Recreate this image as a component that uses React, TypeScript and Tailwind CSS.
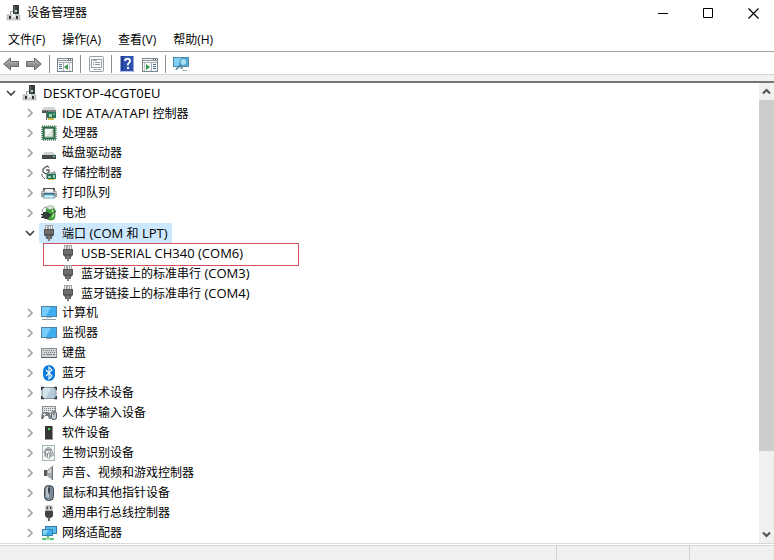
import type { ReactNode } from "react"

const icons: Record<string, ReactNode> = {
  computerRoot: (
    <>
      <rect x="7" y="0" width="6" height="9" fill="#3c3c3c" />
      <rect x="8" y="1" width="1" height="7" fill="#6a6a6a" />
      <rect x="9" y="5" width="2" height="2" fill="#8fd6e8" />
      <path d="M4.5 9V6.5H7" fill="none" stroke="#999" />
      <path d="M2 9h11l1 2H1z" fill="#e2e2e2" />
      <rect x="1" y="10" width="13" height="5" fill="#d2d2d2" stroke="#a3a3a3" strokeWidth=".6" />
      <rect x="3" y="11" width="2" height="3" fill="#333" />
      <rect x="10" y="11" width="2" height="3" fill="#333" />
      <rect x="6" y="9" width="3" height="3" fill="#f5f5f5" />
    </>
  ),
  ide: (
    <>
      <path d="M3 2h10l2 3H1z" fill="#d3d6d6" />
      <rect x="1" y="5" width="14" height="3" fill="#7b8080" />
      <rect x="1" y="6" width="6" height="2" fill="#4b4f4f" />
      <rect x="6" y="7" width="9" height="6" fill="#2a7356" />
      <path d="M8 9h3v3H8z" fill="#a5d8bb" />
      <path d="M12 8h2v2h-2z" fill="#5fae8a" />
      <path d="M5.5 6v9" stroke="#666" />
      <rect x="7" y="13" width="6" height="2" fill="#d5b640" />
    </>
  ),
  cpu: (
    <>
      <rect x="1" y="1" width="14" height="14" fill="none" stroke="#55876a" strokeWidth="1.6" strokeDasharray="1 1" />
      <rect x="1.5" y="1.5" width="13" height="13" fill="#2d6a47" />
      <rect x="4" y="4" width="8" height="8" fill="#dfe8e1" stroke="#a2bba9" />
      <path d="M4 4h8l-8 8z" fill="#f3f7f4" />
    </>
  ),
  disk: (
    <>
      <path d="M4 7h8l3 3H1z" fill="#d2d4d4" />
      <rect x="1" y="10" width="14" height="4" fill="#444b4b" />
      <rect x="12" y="11" width="2" height="1" fill="#5bea86" />
    </>
  ),
  storage: (
    <>
      <path d="M8 2.5 6 1 2 4v3l3 2 3-2V5H5" fill="none" stroke="#515856" strokeWidth="1.3" />
      <path d="M1 9v2l3 3" fill="none" stroke="#59615e" />
      <path d="m5 9 9-3 1 3v5H5z" fill="#9aa6a1" />
      <path d="M6 9h9v5H6z" fill="#2a7356" />
      <path d="M7 11h3v2H7zM12 10h2v3h-2z" fill="#9ccdb0" />
      <rect x="7" y="14" width="6" height="1" fill="#d8b838" />
    </>
  ),
  printer: (
    <>
      <path d="M2 3h12v3H2z" fill="#4f5355" />
      <path d="M4 4h8v3H4z" fill="#f0f4f6" />
      <path d="M0 7 2 5h2v2h8V5h2l2 2v5H0z" fill="#969b9e" />
      <path d="M0 7h16v1H0z" fill="#c9cdcf" />
      <path d="M3 8h10v2H3z" fill="#2d4a55" />
      <path d="M4 9h8l2 4H2z" fill="#dff5fb" stroke="#4a93ab" strokeWidth=".8" />
      <path d="M4 9h8l.5 1.5h-9z" fill="#49a9c6" />
    </>
  ),
  battery: (
    <>
      <path d="M1 7c0-3 2-5 5-5" fill="none" stroke="#8b958f" />
      <rect x="5" y="2" width="9" height="13" rx="4" fill="#3fa435" stroke="#2d7526" strokeWidth=".6" />
      <ellipse cx="9.5" cy="2.6" rx="3.5" ry="1.9" fill="#d9e5d8" stroke="#7a9478" strokeWidth=".6" />
      <path d="M11 5.5c2 1 2 5 0 7" fill="none" stroke="#b4ee9f" strokeWidth="1.4" />
      <path d="M2 7h5l3 3-3 4H4l-3-2z" fill="#343d38" />
      <path d="M0 9.5h3M0 12.5h3M9 10l6-4" stroke="#2a302c" />
    </>
  ),
  port: (
    <>
      <path d="M4 0h8v5H4z" fill="#a3a3a3" />
      <path d="M5 1h1v3H5zM8 1h1v3H8zM10 1h1v3h-1z" fill="#f1f1f1" />
      <path d="M3 4h10v6l-2 2H5l-2-2z" fill="#555" />
      <path d="M4 6h8M4 8h8" stroke="#858585" />
      <path d="M5 11h2v3H5zM9 11h2v3H9z" fill="#666" />
      <path d="M7 11h2v5H7z" fill="#777" />
    </>
  ),
  computer: (
    <>
      <rect x=".5" y="1.5" width="15" height="10" fill="#3eaef1" stroke="#4c83a6" />
      <path d="M1 2h9L5 11H1z" fill="#77cbfa" />
      <path d="M5 12h6v1H5z" fill="#b0bdc5" />
      <path d="M1 14h14v1H1z" fill="#8d9ba3" />
    </>
  ),
  monitor: (
    <>
      <rect x=".5" y="2.5" width="15" height="10" fill="#3eaef1" stroke="#4c83a6" />
      <path d="M1 3h9L5 12H1z" fill="#77cbfa" />
      <path d="M5 13h6v1H5z" fill="#8da0ab" />
    </>
  ),
  keyboard: (
    <>
      <rect x=".5" y="3.5" width="15" height="9" fill="#d1d5d7" stroke="#858b8e" />
      <path d="M2 5.5h12M3 7.5h11" stroke="#7b8387" strokeDasharray="1 1" />
      <path d="M2 9.5h2m1 0h6m1 0h2" stroke="#7b8387" />
      <path d="M0 12h16v1H0z" fill="#555d61" />
    </>
  ),
  bluetooth: (
    <>
      <rect x="2" y="0" width="12" height="16" rx="6" fill="#087bdd" />
      <path d="m5 5 6 6-3 3V2l3 3-6 6" fill="none" stroke="#fff" strokeWidth="1.1" />
    </>
  ),
  memory: (
    <>
      <rect x="1" y="2.5" width="14" height="11" rx="1" fill="#b4cad8" stroke="#89969c" />
      <path d="M2 3h8l-5 10H2z" fill="#d3e3ec" />
      <path d="M.5 5V2.5H3m10 0h2.5V5m0 6v2.5H13M3 13.5H.5V11" fill="none" stroke="#303a40" strokeWidth="1.6" />
    </>
  ),
  hid: (
    <>
      <rect x="1.5" y="1.5" width="13" height="7" fill="#e2e5e7" stroke="#8a9195" />
      <path d="M3 3.5h11M3 5.5h11" stroke="#788085" strokeDasharray="1 1" />
      <path d="M0 14c0-3 1-7 3-7h4c2 0 3 4 3 7H8l-1-3H4l-2 3z" fill="#747b80" />
      <path d="M3.5 8v3M2 9.5h3" stroke="#eee" strokeWidth=".8" />
      <rect x="10.5" y="6.5" width="5" height="8" rx="2" fill="#c1c6c9" stroke="#555b60" />
      <path d="M13 7v3" stroke="#555" />
    </>
  ),
  software: (
    <>
      <path d="M4 1h7v13H4z" fill="#343936" />
      <path d="M11 1h1v13h-1z" fill="#8b908d" />
      <path d="M7 3h2v2H7z" fill="#49e563" />
      <path d="M4 14h8v1H4z" fill="#999" />
    </>
  ),
  fingerprint: (
    <>
      <rect x="1.5" y=".5" width="12" height="15" fill="#f3f8f8" stroke="#a8b5b6" />
      <g fill="none" stroke="#596062" strokeWidth=".8">
        <path d="M4 5c2-3 5-3 7 0M3 8c0-5 8-5 9 0v3M4 11V8c1-4 6-3 6 0v4M6 13c1-2 0-4 1-5s2 0 2 2-1 3-1 4M4 12c1-1 1-2 1-4" />
      </g>
    </>
  ),
  sound: (
    <>
      <path d="M3 5h3v6H3z" fill="#555d60" />
      <path d="m6 5 5-4v14l-5-4z" fill="#a5abad" />
      <path d="M11 1h1v14h-1z" fill="#6b7174" />
      <path d="m7 6 3-3v5H7z" fill="#d2d5d6" />
    </>
  ),
  mouse: (
    <>
      <rect x="3.5" y=".5" width="9" height="15" rx="4" fill="#7d8b98" stroke="#39434b" />
      <path d="M5 3c1-1 2-2 3-2v12c-2 0-3-1-3-3z" fill="#b6c1ca" />
      <path d="M8 1v8" stroke="#27313a" />
      <rect x="7" y="3" width="2" height="4" rx="1" fill="#303a43" />
    </>
  ),
  usb: (
    <>
      <path d="M5 1h6v5H5z" fill="#c8c8c8" stroke="#777" strokeWidth=".7" />
      <path d="M6 2h1v2H6zM9 2h1v2H9z" fill="#333" />
      <path d="M4 6h8v5l-2 2H6l-2-2z" fill="#444" />
      <path d="M7 12h2v4H7z" fill="#666" />
    </>
  ),
  network: (
    <>
      <rect x="4.5" y="1.5" width="11" height="7" fill="#5ab9ed" stroke="#307ba4" />
      <rect x="1.5" y="4.5" width="10" height="6" fill="#3aaeeb" stroke="#3984ad" />
      <path d="M2 5h6l-4 5H2z" fill="#86cff3" />
      <path d="M6 11h2v2H6z" fill="#57a67a" />
      <path d="M1 13h12v2H1z" fill="#62c57f" />
      <path d="M5 12h4v3H5z" fill="#9be0a9" />
    </>
  ),
  back: (
    <>
      <path d="M.7 8 7.5 2v3.5h8v5h-8V14z" fill="#8f8f8f" stroke="#6a6a6a" />
      <path d="M3 8 6.8 4.8v2h7.5" fill="none" stroke="#b4b4b4" />
    </>
  ),
  forward: (
    <>
      <path d="M15.3 8 8.5 2v3.5h-8v5h8V14z" fill="#8f8f8f" stroke="#6a6a6a" />
      <path d="M13 8 9.2 4.8v2H1.7" fill="none" stroke="#b4b4b4" />
    </>
  ),
  showTree: (
    <>
      <rect x=".5" y="2.5" width="15" height="13" fill="#f5f7f8" stroke="#7c868d" />
      <path d="M1 4.5h14" stroke="#8c959b" />
      <path d="M11 3.5h1m1 0h1" stroke="#475f72" />
      <path d="M1 6.5h14M6.5 7v8" stroke="#a7b0b6" />
      <path d="M2 8.5h3m-3 2h3m-3 2h3" stroke="#55738b" />
      <path d="M11 8v6l-4-3z" fill="#35994a" />
      <path d="M12.5 7v8" stroke="#c0c7cc" />
    </>
  ),
  properties: (
    <>
      <rect x="1.5" y=".5" width="14" height="15" rx="1" fill="#fafafa" stroke="#9a9fa3" />
      <rect x="3.5" y="3.5" width="10" height="8" fill="#fff" stroke="#9aa1a6" />
      <path d="M5 3h4v2H5z" fill="#9aa3a9" />
      <path d="M5 6.5h1m1 0h5m-7 2h1m1 0h5" stroke="#8297a8" />
      <path d="M6 13.5h3m1 0h3" stroke="#8f959a" />
    </>
  ),
  action: (
    <>
      <rect x=".5" y="2.5" width="15" height="13" fill="#f5f7f8" stroke="#7c868d" />
      <path d="M1 4.5h14" stroke="#8c959b" />
      <path d="M11 3.5h1m1 0h1" stroke="#475f72" />
      <path d="M1 6.5h14M9.5 7v8" stroke="#a7b0b6" />
      <path d="M11 8.5h3m-3 2h3m-3 2h3" stroke="#55738b" />
      <path d="M4 8v6l4-3z" fill="#35994a" />
      <path d="M2.5 7v8" stroke="#c0c7cc" />
    </>
  ),
  help: (
    <>
      <rect x="1.5" width="13" height="16" fill="#2e51b0" />
      <path d="M2 0h2v15H2z" fill="#203c91" />
      <path d="M2 15h12v1H2z" fill="#b9c3e4" />
      <path d="M6 5c0-3 5-3 5 0 0 2-2.3 2-2.3 4.5" fill="none" stroke="#fff" strokeWidth="1.8" />
      <path d="M8 11h2v2H8z" fill="#fff" />
    </>
  ),
  scan: (
    <>
      <rect x=".5" y="1.5" width="15" height="9" fill="#49b6e9" stroke="#4a8dad" />
      <path d="M1 2h8l-4 8H1z" fill="#80d0f3" />
      <path d="M7 11h3v2H7zM9 14h5v1H9z" fill="#9aa8b0" />
      <circle cx="10.5" cy="6" r="3.6" fill="#a4def8" stroke="#4b87a5" strokeWidth=".9" />
      <path d="m7.8 8.7-5 5" stroke="#4f7f99" strokeWidth="1.5" />
    </>
  ),
}

type Item = { label: string; icon: string; open?: boolean; children?: Item[]; marked?: boolean }

const devices: Item[] = [
  { label: "IDE ATA/ATAPI 控制器", icon: "ide" },
  { label: "处理器", icon: "cpu" },
  { label: "磁盘驱动器", icon: "disk" },
  { label: "存储控制器", icon: "storage" },
  { label: "打印队列", icon: "printer" },
  { label: "电池", icon: "battery" },
  {
    label: "端口 (COM 和 LPT)",
    icon: "port",
    open: true,
    children: [
      { label: "USB-SERIAL CH340 (COM6)", icon: "port", marked: true },
      { label: "蓝牙链接上的标准串行 (COM3)", icon: "port" },
      { label: "蓝牙链接上的标准串行 (COM4)", icon: "port" },
    ],
  },
  { label: "计算机", icon: "computer" },
  { label: "监视器", icon: "monitor" },
  { label: "键盘", icon: "keyboard" },
  { label: "蓝牙", icon: "bluetooth" },
  { label: "内存技术设备", icon: "memory" },
  { label: "人体学输入设备", icon: "hid" },
  { label: "软件设备", icon: "software" },
  { label: "生物识别设备", icon: "fingerprint" },
  { label: "声音、视频和游戏控制器", icon: "sound" },
  { label: "鼠标和其他指针设备", icon: "mouse" },
  { label: "通用串行总线控制器", icon: "usb" },
  { label: "网络适配器", icon: "network" },
]

function Icon({ name }: { name: string }) {
  return (
    <svg className="size-4 shrink-0" viewBox="0 0 16 16" aria-hidden="true">
      {icons[name]}
    </svg>
  )
}

// Latin runs are set one size up so their capitals sit level with the Chinese glyphs
function Label({ text }: { text: string }) {
  return (
    <span className="whitespace-pre">
      {text.split(/([ -~]+)/).map((part, i) =>
        i % 2 ? (
          <span key={i} className="text-[13px] leading-4">
            {part}
          </span>
        ) : (
          part
        )
      )}
    </span>
  )
}

function Toggle({ open }: { open?: boolean }) {
  return (
    <button type="button" className="flex w-4 shrink-0 justify-center" aria-label={open ? "折叠" : "展开"}>
      <svg className="size-[10px]" viewBox="0 0 10 10" fill="none" strokeWidth="1.6">
        {open ? <path d="m1 3 4 4 4-4" stroke="#404040" /> : <path d="m3 1 4 4-4 4" stroke="#a0a0a0" />}
      </svg>
    </button>
  )
}

function Separator() {
  return <span className="h-[18px] w-px bg-[#8c8c8c]" />
}

function ToolButton({ name, label }: { name: string; label: string }) {
  return (
    <button type="button" aria-label={label}>
      <Icon name={name} />
    </button>
  )
}

function Device({ item }: { item: Item }) {
  return (
    <li role="treeitem" aria-expanded={!!item.open}>
      <div className="flex h-5 items-center gap-px">
        <Toggle open={item.open} />
        <span className={`flex h-full items-center gap-[5px] pr-1 pl-[2px] ${item.open ? "bg-[#cce8ff]" : ""}`}>
          <Icon name={item.icon} />
          <Label text={item.label} />
        </span>
      </div>
      {item.children && (
        <ul role="group" className="pl-[38px]">
          {item.children.map((child) => (
            <li key={child.label} role="treeitem" className="relative flex h-5 items-center gap-[5px]">
              <Icon name={child.icon} />
              <Label text={child.label} />
              {child.marked && (
                <span className="pointer-events-none absolute top-0 -left-[17px] h-[23px] w-64 border border-[#d4505c]" />
              )}
            </li>
          ))}
        </ul>
      )}
    </li>
  )
}

export default function App() {
  return (
    <div className="flex min-h-screen flex-col bg-white font-['Open_Sans','Noto_Sans_CJK_SC',sans-serif] text-xs text-black">
      <header className="flex h-[26px] items-center pl-[6px]">
        <Icon name="computerRoot" />
        <h1 className="ml-[5px] flex-1">设备管理器</h1>
        <button type="button" aria-label="最小化" className="flex h-full w-[45px] items-center justify-center">
          <svg className="size-[11px]" viewBox="0 0 11 11" fill="none" stroke="#000">
            <path d="M0 5.5h10" />
          </svg>
        </button>
        <button type="button" aria-label="最大化" className="flex h-full w-[45px] items-center justify-center">
          <svg className="size-[11px]" viewBox="0 0 11 11" fill="none" stroke="#000">
            <path d="M.5.5h9v9h-9z" />
          </svg>
        </button>
        <button type="button" aria-label="关闭" className="flex h-full w-[43px] items-center justify-center pl-[2px]">
          <svg className="size-[11px]" viewBox="0 0 11 11" fill="none" stroke="#000" strokeWidth="1.2">
            <path d="m.5.5 10 10m0-10-10 10" />
          </svg>
        </button>
      </header>

      <nav className="flex h-[26px] items-center gap-[17px] border-b border-[#a0a0a0] pt-[2px] pl-2">
        <button type="button">文件(F)</button>
        <button type="button">操作(A)</button>
        <button type="button">查看(V)</button>
        <button type="button">帮助(H)</button>
      </nav>

      <div className="flex h-[22px] items-center gap-[7px] pt-[2px] pl-[3px]">
        <ToolButton name="back" label="后退" />
        <ToolButton name="forward" label="前进" />
        <Separator />
        <ToolButton name="showTree" label="显示/隐藏控制台树" />
        <Separator />
        <ToolButton name="properties" label="属性" />
        <Separator />
        <ToolButton name="help" label="帮助" />
        <ToolButton name="action" label="显示/隐藏操作窗格" />
        <Separator />
        <ToolButton name="scan" label="扫描检测硬件改动" />
      </div>
      <div className="h-[7px] border-t border-[#d5d5d5] bg-[#f0f0f0]" />

      <main className="flex flex-1 border-t-2 border-[#767676]">
        <ul role="tree" className="flex-1 pl-[3px]">
          <li role="treeitem" aria-expanded="true">
            <div className="flex h-5 items-center">
              <Toggle open />
              <span className="ml-[3px] flex items-center gap-[5px]">
                <Icon name="computerRoot" />
                <Label text="DESKTOP-4CGT0EU" />
              </span>
            </div>
            <ul role="group" className="pl-[19px]">
              {devices.map((item) => (
                <Device key={item.label} item={item} />
              ))}
            </ul>
          </li>
        </ul>
        <div className="flex w-[15px] flex-col bg-[#f0f0f0]">
          <button type="button" aria-label="向上滚动" className="flex h-[17px] items-center justify-center">
            <svg className="size-[9px]" viewBox="0 0 9 9" fill="none" stroke="#505050" strokeWidth="2">
              <path d="m1 6.5 3.5-3.5L8 6.5" />
            </svg>
          </button>
          <div className="flex flex-1 flex-col">
            <div className="grow-[33] bg-[#cdcdcd]" />
            <div className="grow-[7]" />
          </div>
          <button type="button" aria-label="向下滚动" className="flex h-[17px] items-center justify-center">
            <svg className="size-[9px]" viewBox="0 0 9 9" fill="none" stroke="#505050" strokeWidth="2">
              <path d="m1 2.5 3.5 3.5L8 2.5" />
            </svg>
          </button>
        </div>
      </main>

      <footer className="border-t border-[#d9d9d9] pt-px">
        <div className="flex h-[15px] border-t border-[#d9d9d9] bg-[#f0f0f0]">
          <span className="flex-1" />
          <span className="w-[133px] border-l border-[#d0d0d0]" />
          <span className="w-[85px] border-l border-[#d0d0d0]" />
        </div>
      </footer>
    </div>
  )
}
